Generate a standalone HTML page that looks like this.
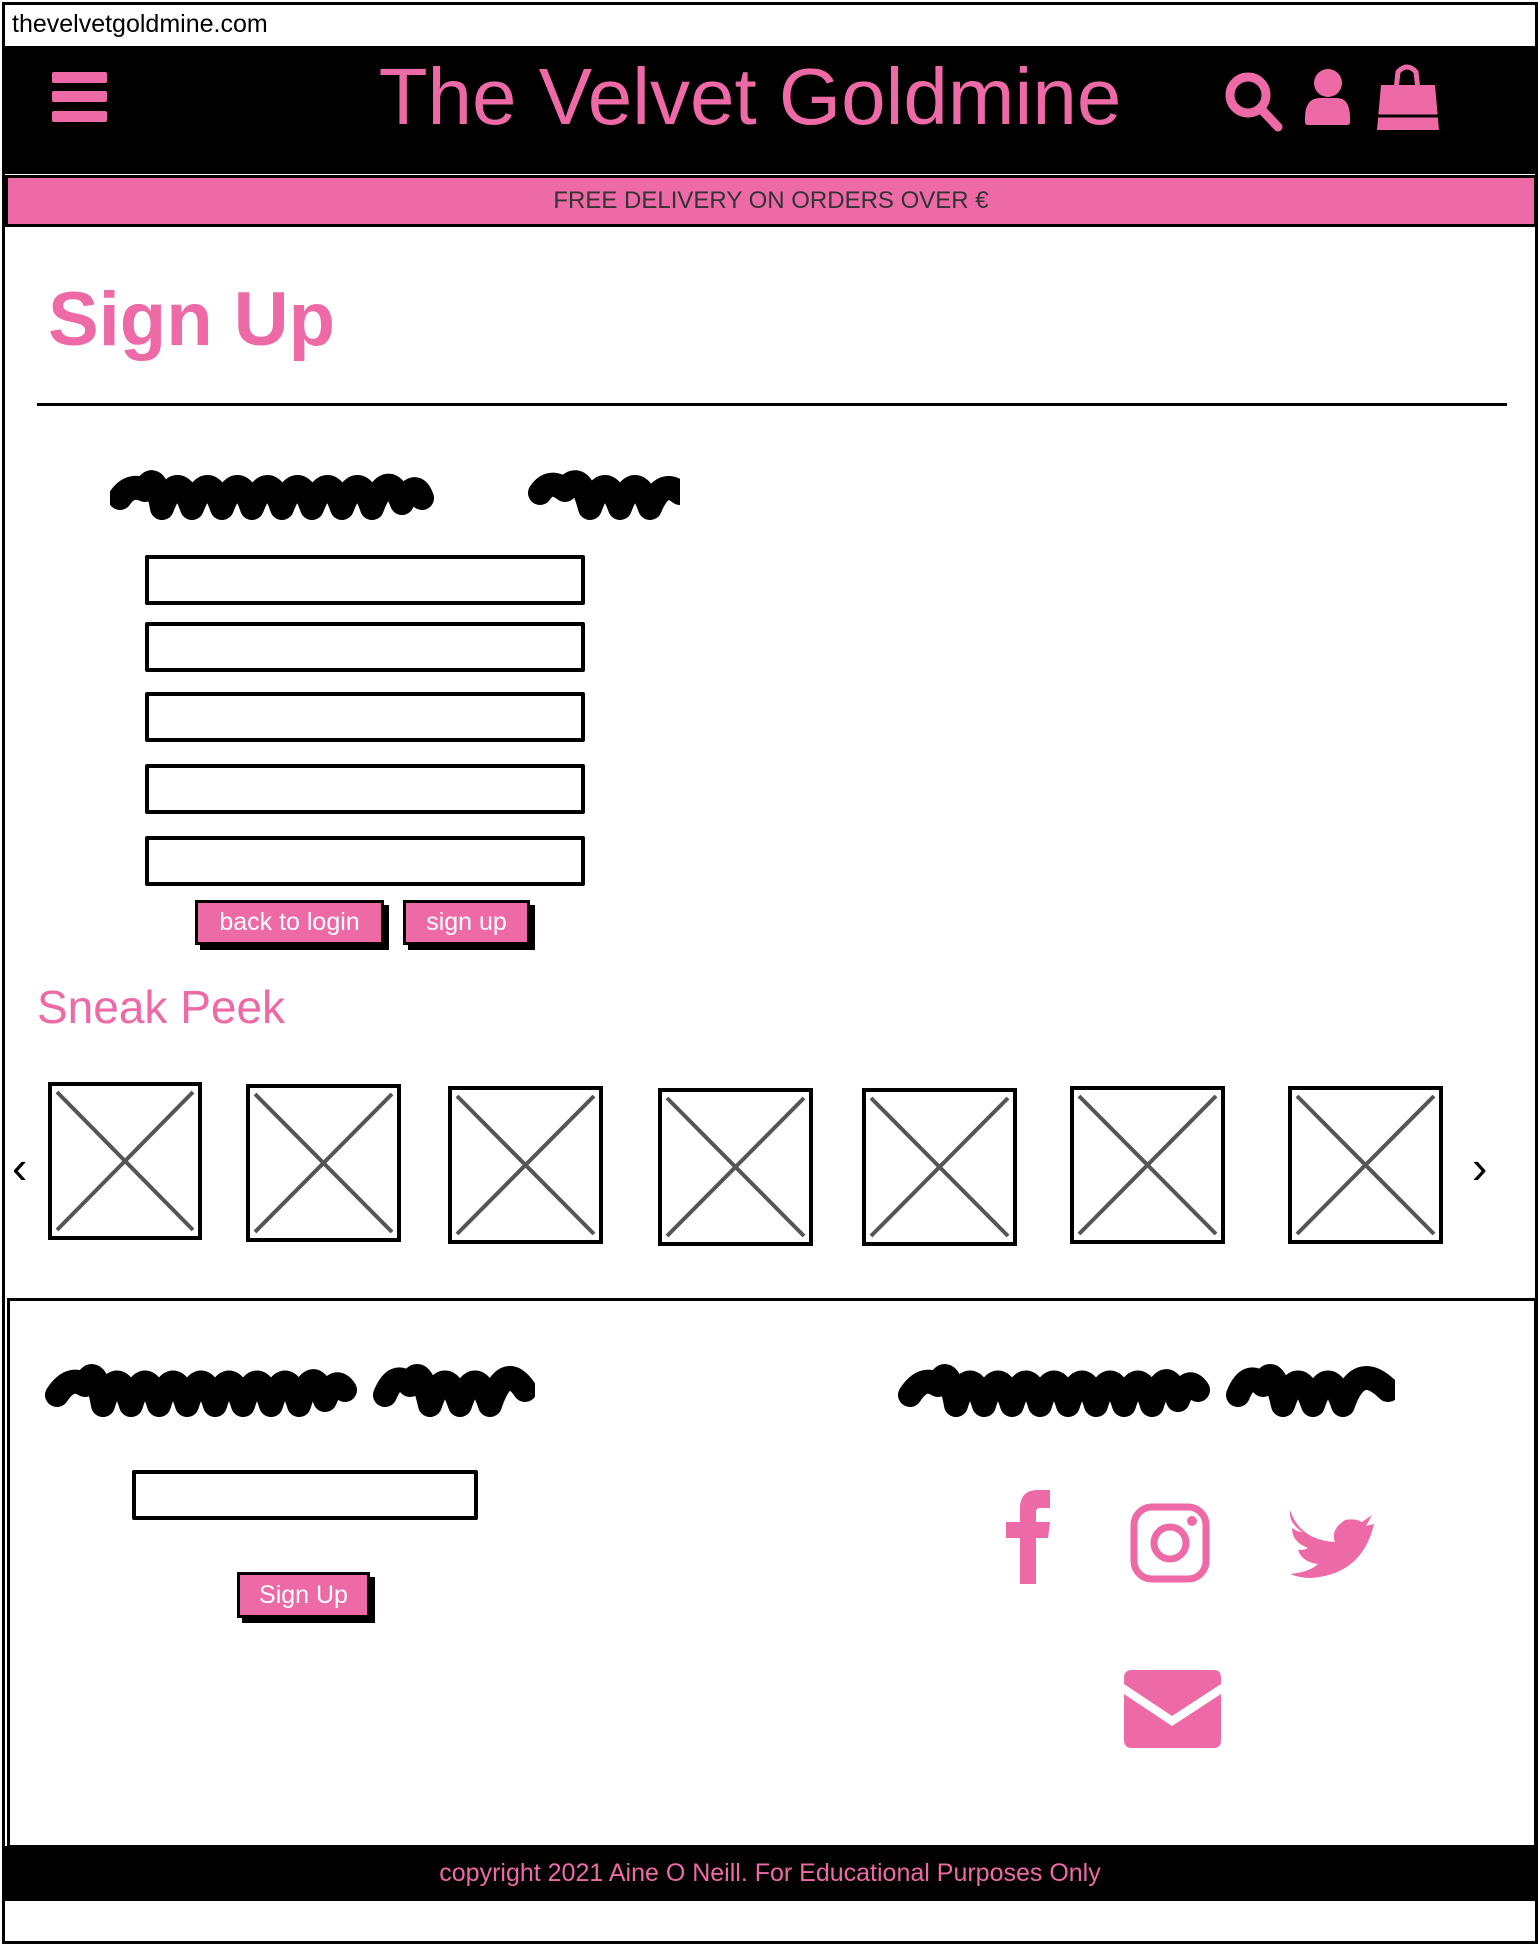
<!DOCTYPE html>
<html><head><meta charset="utf-8"><style>
body{margin:0;width:1540px;height:1946px;position:relative;background:#fff;font-family:"Liberation Sans",sans-serif;overflow:hidden}
.a{position:absolute;box-sizing:border-box}
.pink{color:#ee6aa7}
.inp{position:absolute;border:4px solid #000;background:#fff;box-sizing:border-box;border-radius:2px}
.btn{position:absolute;background:#ee6aa7;color:#fff;font-size:25px;text-align:center;box-sizing:border-box;border:3px solid #000;box-shadow:5px 5px 0 #000}
.img{position:absolute;border:4px solid #000;box-sizing:border-box}
</style></head><body>
<div class="a" style="left:2px;top:2px;width:1536px;height:1942px;border:3px solid #000"></div>
<div class="a" style="left:12px;top:10px;font-size:25px;color:#000">thevelvetgoldmine.com</div>
<div class="a" style="left:2px;top:46px;width:1536px;height:128px;background:#000"></div>
<div class="a" style="left:52px;top:72px;width:55px;height:11px;background:#ee6aa7;border-radius:2px"></div>
<div class="a" style="left:52px;top:91px;width:55px;height:11px;background:#ee6aa7;border-radius:2px"></div>
<div class="a" style="left:52px;top:111px;width:55px;height:11px;background:#ee6aa7;border-radius:2px"></div>
<div class="a pink" style="left:300px;top:52px;width:900px;text-align:center;font-size:80px;line-height:90px">The Velvet Goldmine</div>
<svg class="a" style="left:1200px;top:50px" width="260" height="100">
<circle cx="48" cy="45" r="18" fill="none" stroke="#ee6aa7" stroke-width="9"/>
<line x1="62" y1="60" x2="78" y2="77" stroke="#ee6aa7" stroke-width="9" stroke-linecap="round"/>
<circle cx="128" cy="33" r="14" fill="#ee6aa7"/>
<path d="M105 68 Q105 48 120 48 L137 48 Q150 48 150 68 L150 72 Q150 75 147 75 L108 75 Q105 75 105 72Z" fill="#ee6aa7"/>
<path d="M196 40 L198 22 Q207 12 216 22 L218 40" fill="none" stroke="#ee6aa7" stroke-width="5"/>
<path d="M181 35 L235 35 L239 80 L177 80Z" fill="#ee6aa7"/>
<line x1="177" y1="66" x2="239" y2="66" stroke="#000" stroke-width="3"/>
</svg>
<div class="a" style="left:5px;top:175px;width:1532px;height:52px;background:#ee6aa7;border:3px solid #000;text-align:center;font-size:24px;line-height:46px;color:#333">FREE DELIVERY ON ORDERS OVER €</div>
<div class="a pink" style="left:48px;top:275px;font-size:76px;font-weight:bold;line-height:90px">Sign Up</div>
<div class="a" style="left:37px;top:403px;width:1470px;height:3px;background:#000"></div>
<svg class="a" style="left:110px;top:458px" width="570" height="70"><path d="M10 40 Q20 25 35 32 Q45 10 52 50 Q68 8 82 50 Q98 8 112 50 Q128 8 142 50 Q158 8 172 50 Q188 8 202 50 Q218 8 232 50 Q248 8 262 50 Q278 8 292 45 Q305 20 312 40 M430 35 Q440 20 455 32 Q470 10 480 50 Q495 8 510 50 Q525 8 540 50 Q552 20 570 35" fill="none" stroke="#000" stroke-width="24" stroke-linecap="round" stroke-linejoin="round"/></svg>
<div class="inp" style="left:145px;top:555px;width:440px;height:50px"></div>
<div class="inp" style="left:145px;top:622px;width:440px;height:50px"></div>
<div class="inp" style="left:145px;top:692px;width:440px;height:50px"></div>
<div class="inp" style="left:145px;top:764px;width:440px;height:50px"></div>
<div class="inp" style="left:145px;top:836px;width:440px;height:50px"></div>
<div class="btn" style="left:195px;top:900px;width:189px;height:45px;line-height:38px">back to login</div>
<div class="btn" style="left:403px;top:900px;width:127px;height:45px;line-height:38px">sign up</div>
<div class="a pink" style="left:37px;top:980px;font-size:46px;line-height:54px">Sneak Peek</div>
<div class="a" style="left:12px;top:1140px;font-size:46px">‹</div>
<div class="a" style="left:1472px;top:1140px;font-size:46px">›</div>
<svg class="a" style="left:0;top:1080px" width="1540" height="170" fill="none" stroke="#555" stroke-width="4">
<g stroke="#000" stroke-width="4">
<rect x="50" y="4" width="150" height="154"/><rect x="248" y="6" width="151" height="154"/><rect x="450" y="8" width="151" height="154"/><rect x="660" y="10" width="151" height="154"/><rect x="864" y="10" width="151" height="154"/><rect x="1072" y="8" width="151" height="154"/><rect x="1290" y="8" width="151" height="154"/></g>
<path d="M57 12L193 150M193 12L57 150M255 14L392 152M392 14L255 152M457 16L594 154M594 16L457 154M667 18L804 156M804 18L667 156M871 18L1008 156M1008 18L871 156M1079 16L1216 154M1216 16L1079 154M1297 16L1434 154M1434 16L1297 154"/>
</svg>
<div class="a" style="left:7px;top:1298px;width:1530px;height:550px;border:3px solid #000"></div>
<svg class="a" style="left:45px;top:1350px" width="490" height="75"><path d="M12 45 Q25 25 40 35 Q50 10 58 55 Q72 10 86 55 Q100 10 114 55 Q128 10 142 55 Q156 10 170 55 Q184 10 198 55 Q212 10 226 55 Q240 10 254 55 Q268 10 280 50 Q290 25 300 40 M340 45 Q350 20 365 35 Q375 10 385 55 Q400 10 415 55 Q430 10 445 55 Q460 10 480 40" fill="none" stroke="#000" stroke-width="24" stroke-linecap="round" stroke-linejoin="round"/></svg>
<svg class="a" style="left:898px;top:1350px" width="497" height="75"><path d="M12 45 Q25 25 40 35 Q50 10 58 55 Q72 10 86 55 Q100 10 114 55 Q128 10 142 55 Q156 10 170 55 Q184 10 198 55 Q212 10 226 55 Q240 10 254 55 Q268 10 280 50 Q290 25 300 40 M340 45 Q350 20 365 35 Q375 10 385 55 Q400 10 415 55 Q430 10 445 55 Q460 10 490 40" fill="none" stroke="#000" stroke-width="24" stroke-linecap="round" stroke-linejoin="round"/></svg>
<div class="inp" style="left:132px;top:1470px;width:346px;height:50px"></div>
<div class="btn" style="left:237px;top:1572px;width:133px;height:46px;line-height:40px">Sign Up</div>
<svg class="a" style="left:1000px;top:1480px" width="400" height="280" fill="#ee6aa7">
<path d="M20 104 L20 58 L6 58 L6 42 L20 42 L20 28 Q20 10 38 10 L50 10 L50 28 L40 28 Q36 28 36 32 L36 42 L50 42 L48 58 L36 58 L36 104Z"/>
<rect x="134" y="27" width="72" height="72" rx="18" fill="none" stroke="#ee6aa7" stroke-width="7"/>
<circle cx="170" cy="63" r="16" fill="none" stroke="#ee6aa7" stroke-width="7"/><circle cx="192" cy="41" r="5"/>
<path d="M290 30 Q300 60 335 62 Q330 50 345 40 Q355 38 362 42 L372 35 L366 46 L374 44 Q362 95 310 98 Q300 98 290 94 Q310 92 318 84 Q302 82 298 70 Q305 70 308 68 Q292 62 292 48 Q298 52 302 52 Q288 42 290 30Z"/>
<path d="M124 198 Q124 190 132 190 L214 190 Q221 190 221 198 L221 204 L172 236 L124 204Z"/>
<path d="M124 214 L172 246 L221 214 L221 260 Q221 268 214 268 L132 268 Q124 268 124 260Z"/>
</svg>
<div class="a" style="left:4px;top:1846px;width:1532px;height:55px;background:#000;color:#ee6aa7;text-align:center;font-size:25px;line-height:55px">copyright 2021 Aine O Neill. For Educational Purposes Only</div>
</body></html>
